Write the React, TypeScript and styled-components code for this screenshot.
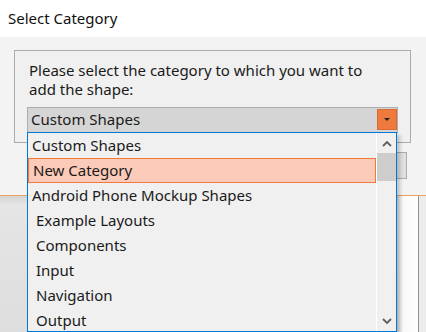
import React from "react";
import styled, { createGlobalStyle } from "styled-components";

const Global = createGlobalStyle`
  html, body { margin: 0; padding: 0; background: #ffffff; }
  body { font-family: "Noto Sans", "Open Sans", sans-serif; color: #1a1a1a; }
  * { box-sizing: border-box; }
`;

const Root = styled.div`
  position: relative;
  width: 426px;
  height: 332px;
  overflow: hidden;
  display: flex;
  flex-direction: column;
`;

const Dialog = styled.div`
  display: flex;
  flex-direction: column;
  flex: none;
`;

const TitleBar = styled.div`
  height: 37px;
  background: #ffffff;
  padding-left: 8px;
  font-size: 15px;
  line-height: 36px;
  color: #111111;
`;

const Body = styled.div`
  height: 159px;
  background: #f3f3f3;
  border-bottom: 1px solid #eba25a;
  padding: 13px 19px 0 14px;
  display: flex;
  flex-direction: column;
`;

const GroupBox = styled.div`
  width: 397px;
  height: 93px;
  border: 1px solid #ababab;
  background: #f0f0f0;
  padding: 10px 0 0 12px;
  display: flex;
  flex-direction: column;
`;

const Prompt = styled.div`
  margin-left: 2px;
  width: 348px;
  font-size: 15px;
  line-height: 19px;
`;

const ComboWrap = styled.div`
  position: relative;
  margin-top: 8px;
  width: 371px;
`;

const Combo = styled.div`
  height: 26px;
  border: 1px solid #adadad;
  background: #d5d5d5;
  display: flex;
  align-items: flex-start;
  justify-content: space-between;
  padding-left: 3px;
`;

const ComboText = styled.span`
  font-size: 15px;
  line-height: 23px;
`;

const DropButton = styled.div`
  width: 20px;
  height: 21px;
  margin-top: 1px;
  background: #ef7a3e;
  border: 1px solid #dc6a30;
  display: flex;
  align-items: center;
  justify-content: center;
`;

const Triangle = styled.div`
  width: 0;
  height: 0;
  border-left: 3px solid transparent;
  border-right: 3px solid transparent;
  border-top: 3px solid #222222;
`;

const DropList = styled.div`
  position: absolute;
  top: 25px;
  left: 0;
  width: 370px;
  height: 200px;
  border: 1px solid #0078d7;
  background: #f0f0f0;
  box-shadow: 3px 3px 4px rgba(0, 0, 0, 0.22);
  display: flex;
  z-index: 10;
  overflow: hidden;
`;

const Items = styled.div`
  width: 348px;
  display: flex;
  flex-direction: column;
`;

const Item = styled.div<{ $indent: number; $selected?: boolean }>`
  flex: none;
  height: 25px;
  font-size: 15px;
  padding-left: ${(p) => p.$indent - (p.$selected ? 1 : 0)}px;
  background: ${(p) => (p.$selected ? "#fbcab8" : "transparent")};
  border: ${(p) => (p.$selected ? "1px solid #f07a3c" : "none")};
  line-height: ${(p) => (p.$selected ? "22px" : "24px")};
  white-space: nowrap;
`;

const Separator = styled.div`
  width: 1px;
  background: #ffffff;
`;

const ScrollBar = styled.div`
  width: 19px;
  display: flex;
  flex-direction: column;
  align-items: center;
`;

const ArrowBox = styled.div`
  height: 20px;
  width: 19px;
  display: flex;
  align-items: center;
  justify-content: center;
`;

const Thumb = styled.div`
  width: 19px;
  height: 28px;
  background: #cdcdcd;
`;

const Track = styled.div`
  flex: 1;
`;

const ButtonRow = styled.div`
  display: flex;
  justify-content: flex-end;
  margin-top: 9px;
`;

const DialogButton = styled.div`
  width: 75px;
  height: 27px;
  border: 1px solid #adadad;
  background: #e1e1e1;
`;

const Backdrop = styled.div`
  flex: 1;
  display: flex;
`;

const LeftPane = styled.div`
  flex: 1;
  background: linear-gradient(#d4d4d4 0px, #e6e6e6 9px, #e3e3e3 40px, #dedede 100%);
`;

const SidePanel = styled.div`
  width: 20px;
  background: linear-gradient(90deg, #e2e2e2 0px, #f9f9f9 5px, #fdfdfd 100%);
`;

const Divider = styled.div`
  width: 1px;
  background: #8f8f8f;
`;

const RightEdge = styled.div`
  width: 7px;
  background: #ececec;
`;

const Chevron = ({ up }: { up?: boolean }) => (
  <svg width="10" height="7" viewBox="0 0 10 7">
    <path
      d={up ? "M1 6 L5 2 L9 6" : "M1 1 L5 5 L9 1"}
      fill="none"
      stroke="#5f5f5f"
      strokeWidth="1.8"
    />
  </svg>
);

const items: { label: string; indent: number; selected?: boolean }[] = [
  { label: "Custom Shapes", indent: 4 },
  { label: "New Category", indent: 5, selected: true },
  { label: "Android Phone Mockup Shapes", indent: 4 },
  { label: "Example Layouts", indent: 8 },
  { label: "Components", indent: 8 },
  { label: "Input", indent: 8 },
  { label: "Navigation", indent: 8 },
  { label: "Output", indent: 8 },
];

export default function App() {
  return (
    <>
      <Global />
      <Root>
        <Dialog>
          <TitleBar>Select Category</TitleBar>
          <Body>
            <GroupBox>
              <Prompt>Please select the category to which you want to add the shape:</Prompt>
              <ComboWrap>
                <Combo>
                  <ComboText>Custom Shapes</ComboText>
                  <DropButton>
                    <Triangle />
                  </DropButton>
                </Combo>
                <DropList>
                  <Items>
                    {items.map((it) => (
                      <Item key={it.label} $indent={it.indent} $selected={it.selected}>
                        {it.label}
                      </Item>
                    ))}
                  </Items>
                  <Separator />
                  <ScrollBar>
                    <ArrowBox>
                      <Chevron up />
                    </ArrowBox>
                    <Thumb />
                    <Track />
                    <ArrowBox>
                      <Chevron />
                    </ArrowBox>
                  </ScrollBar>
                </DropList>
              </ComboWrap>
            </GroupBox>
            <ButtonRow>
              <DialogButton />
            </ButtonRow>
          </Body>
        </Dialog>
        <Backdrop>
          <LeftPane />
          <SidePanel />
          <Divider />
          <RightEdge />
        </Backdrop>
      </Root>
    </>
  );
}
